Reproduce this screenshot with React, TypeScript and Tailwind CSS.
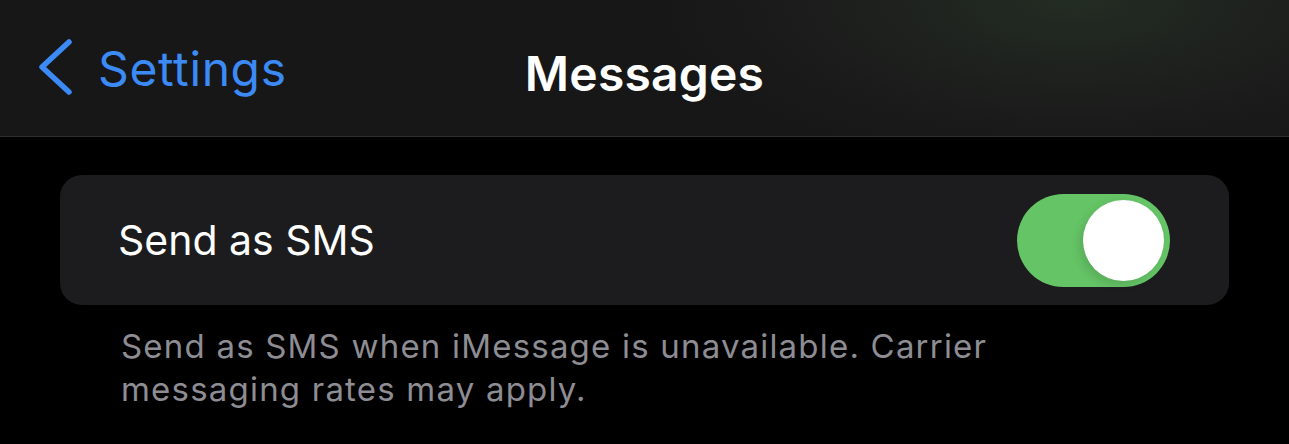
import React, { useState } from 'react';

const FONT = "font-['Inter','Liberation_Sans',sans-serif]";

const BackChevron: React.FC = () => (
  <svg width="40" height="64" viewBox="0 0 40 64" className="shrink-0">
    <path
      d="M32 5 L5 30 L32 55"
      fill="none"
      stroke="#3b8af5"
      strokeWidth="5.5"
      strokeLinecap="round"
      strokeLinejoin="round"
    />
  </svg>
);

const Toggle: React.FC<{ on: boolean; onChange: (v: boolean) => void }> = ({ on, onChange }) => (
  <button
    onClick={() => onChange(!on)}
    className={`flex h-[93px] w-[153px] items-center rounded-full p-[6px] ${
      on ? 'justify-end bg-[#65c466]' : 'justify-start bg-[#39393d]'
    }`}
  >
    <span className="block h-[81px] w-[81px] rounded-full bg-white shadow-[-4px_4px_10px_rgba(0,0,0,0.12)]" />
  </button>
);

const App: React.FC = () => {
  const [sendAsSms, setSendAsSms] = useState(true);

  return (
    <div className={`min-h-screen bg-black text-white ${FONT}`}>
      {/* nav bar */}
      <header className="relative flex h-[137px] items-center border-b border-[#2e2e2e] bg-[radial-gradient(ellipse_420px_170px_at_1075px_0px,#232c23,#1b1b1b_70%,#171717)]">
        <div className="flex items-center gap-[21px] pl-[37px] pt-[2px]">
          <BackChevron />
          <span className="text-[48px] leading-none tracking-[0.6px] text-[#3b8af5]">Settings</span>
        </div>
        <h1 className="absolute left-1/2 top-[50px] -translate-x-1/2 text-[48px] font-semibold leading-none tracking-[0.2px]">
          Messages
        </h1>
      </header>

      {/* settings group */}
      <main className="px-[60px] pt-[38px]">
        <div className="flex h-[130px] items-center justify-between rounded-[22px] bg-[#1c1c1e] pl-[58px] pr-[59px]">
          <span className="text-[41px] leading-none">Send as SMS</span>
          <Toggle on={sendAsSms} onChange={setSendAsSms} />
        </div>
        <p className="max-w-[960px] pl-[61px] pt-[20px] text-[33px] leading-[43px] tracking-[1.2px] text-[#8d8d93]">
          Send as SMS when iMessage is unavailable. Carrier messaging rates may apply.
        </p>
      </main>
    </div>
  );
};

export default App;
